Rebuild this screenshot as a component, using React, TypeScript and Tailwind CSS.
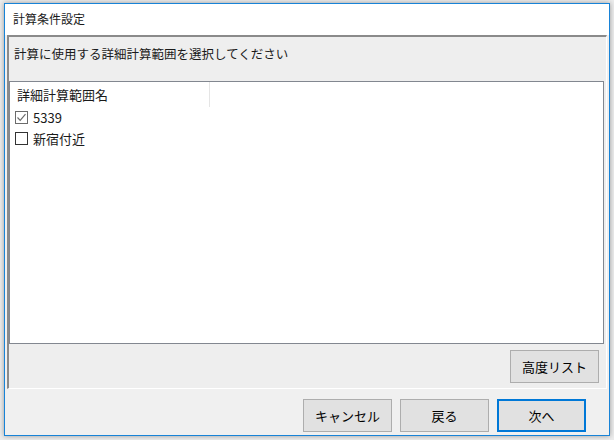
import { useState } from "react"

type Area = { name: string; checked: boolean }

const initial: Area[] = [
  { name: "5339", checked: true },
  { name: "新宿付近", checked: false },
]

const CheckBox = ({ checked }: { checked: boolean }) => (
  <span
    className={
      "flex h-[13px] w-[13px] items-center justify-center border bg-white " +
      (checked ? "border-[#6b6b6b]" : "border-[#333333]")
    }
  >
    {checked && (
      <svg width="11" height="11" viewBox="0 0 11 11">
        <polyline points="1.5,5.5 4.2,8.3 9.5,2.2" fill="none" stroke="#6b6b6b" strokeWidth="1.2" />
      </svg>
    )}
  </span>
)

const DlgButton = ({ label, primary }: { label: string; primary?: boolean }) => (
  <button
    className={
      "flex h-[33px] w-[89px] items-center justify-center bg-[#e1e1e1] text-[13px] text-black " +
      (primary ? "border-2 border-[#0078d7]" : "border border-[#adadad]")
    }
  >
    {label}
  </button>
)

export default function App() {
  const [areas, setAreas] = useState(initial)

  const toggle = (i: number) =>
    setAreas(areas.map((a, j) => (j === i ? { ...a, checked: !a.checked } : a)))

  return (
    <div className="h-[440px] w-[614px] bg-[#ececec] pl-[4px] pt-[3px] font-['Noto_Sans_CJK_JP','Noto_Sans',sans-serif] text-[#1a1a1a]">
      <div className="flex h-[433px] w-[606px] flex-col border border-[#1883d7] bg-[#f0f0f0] shadow-[0_0_5px_rgba(0,0,0,0.35)]">
        {/* title bar */}
        <div className="flex h-[31px] items-center bg-white pb-[2px] pl-[8px] text-[12px]">計算条件設定</div>

        {/* sunken panel */}
        <div className="ml-[2px] flex h-[354px] w-[600px] flex-col border-b border-l-2 border-r border-t-2 border-b-white border-l-[#8a8a8a] border-r-white border-t-[#8a8a8a] bg-[#eeeeee]">
          <div className="h-[44px] pl-[5px] pt-[9px] text-[12.5px] leading-[16px]">
            計算に使用する詳細計算範囲を選択してください
          </div>

          <div className="mr-[2px] h-[263px] border border-[#828790] bg-white text-[13px]">
            <div className="flex h-[25px]">
              <div className="flex w-[200px] items-center border-r border-[#e5e5e5] pl-[7px] pt-[1px]">詳細計算範囲名</div>
            </div>
            {areas.map((a, i) => (
              <div key={a.name} className="flex h-[21px] cursor-default items-center gap-[5px] pl-[5px]" onClick={() => toggle(i)}>
                <CheckBox checked={a.checked} />
                <span>{a.name}</span>
              </div>
            ))}
          </div>

          <div className="mr-[7px] mt-[6px] flex justify-end">
            <DlgButton label="高度リスト" />
          </div>
        </div>

        {/* footer */}
        <div className="flex flex-1 justify-end gap-[8px] pr-[23px] pt-[10px]">
          <DlgButton label="キャンセル" />
          <DlgButton label="戻る" />
          <DlgButton label="次へ" primary />
        </div>
      </div>
    </div>
  )
}
